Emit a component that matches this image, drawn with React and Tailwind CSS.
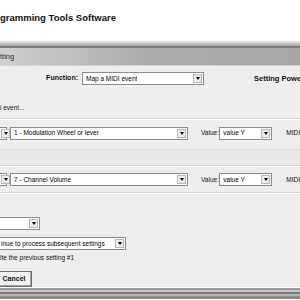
function Arrow() {
  return (
    <div className="ml-auto w-[9px] h-full shrink-0 bg-[#ececec] border border-[#b8b8b8] flex items-center justify-center">
      <div className="w-0 h-0 border-l-[2.5px] border-r-[2.5px] border-t-[3px] border-l-transparent border-r-transparent border-t-black" />
    </div>
  );
}

function Select({ width, text, className = '', cut = false }) {
  return (
    <div className={`h-[13px] bg-white border border-[#8c8c8c] flex items-center shrink-0 p-[1px] ${width} ${className}`}>
      <span className={`block text-left min-w-0 overflow-hidden whitespace-nowrap text-[6.5px] text-black ${cut ? '' : 'pl-[2px]'}`}>{text}</span>
      <Arrow />
    </div>
  );
}

export default function App() {
  return (
    <div className="w-[300px] h-[300px] overflow-hidden bg-white flex flex-col font-['Liberation_Sans',Arial,sans-serif] text-[#111]">
      {/* page header */}
      <div className="h-[40px] shrink-0 flex items-center">
        <h1 className="text-[9.5px] font-bold leading-none -mt-[4px] whitespace-nowrap">gramming Tools Software</h1>
      </div>

      {/* window frame top */}
      <div className="h-[6px] shrink-0 bg-gradient-to-b from-white to-[#a4a4a4]" />
      <div className="h-[2px] shrink-0 bg-[#7e7e7e]" />
      <div className="h-[17px] shrink-0 bg-gradient-to-r from-[#d0d0d0] via-[#ababab] to-[#a7a7a7] flex items-center">
        <span className="text-[7.5px] text-[#2a2a2a]">tting</span>
      </div>
      <div className="h-[1px] shrink-0 bg-[#d6d6d6]" />

      {/* dialog body */}
      <div className="h-[221px] shrink-0 bg-[#eeeeee] flex flex-col text-[6.5px]">
        <div className="flex items-center h-[13px] mt-[6px]">
          <span className="w-[78px] shrink-0 text-right font-bold text-[7px]">Function:</span>
          <Select width="w-[122px]" text="Map a MIDI event" className="ml-[4px]" />
          <span className="ml-[50px] shrink-0 font-bold text-[7.5px] whitespace-nowrap">Setting Power</span>
        </div>

        <div className="h-[20px] mt-[13px] flex items-center">
          <span>l event...</span>
        </div>
        <div className="h-[1px] bg-[#d4d4d4]" />
        <div className="h-[1px] bg-white" />

        <div className="flex items-center h-[13px] mt-[7px]">
          <div className="w-[7px] h-full bg-white border-y border-r border-[#8c8c8c] p-[1px] flex">
            <Arrow />
          </div>
          <Select width="w-[178px]" text="1 - Modulation Wheel or lever" className="ml-[3px]" />
          <span className="ml-[13px] w-[21px]">Value:</span>
          <Select width="w-[53px]" text="value Y" />
          <span className="ml-[14px]">MIDI</span>
        </div>

        <div className="h-[1px] bg-[#dcdcdc] mt-[9px]" />
        <div className="h-[16px] bg-[#e9e9e9]" />
        <div className="h-[1px] bg-[#d2d2d2]" />
        <div className="h-[1px] bg-white" />

        <div className="flex items-center h-[13px] mt-[6px]">
          <div className="w-[7px] h-full bg-white border-y border-r border-[#8c8c8c] p-[1px] flex">
            <Arrow />
          </div>
          <Select width="w-[178px]" text="7 - Channel Volume" className="ml-[3px]" />
          <span className="ml-[13px] w-[21px]">Value:</span>
          <Select width="w-[53px]" text="value Y" />
          <span className="ml-[14px]">MIDI</span>
        </div>

        <div className="h-[1px] bg-[#d4d4d4] mt-[6px]" />
        <div className="h-[1px] bg-white" />

        <Select width="w-[40px]" text="" cut className="mt-[23px] border-l-0" />
        <Select width="w-[126px]" text="inue to process subsequent settings" cut className="mt-[7px] border-l-0" />
        <div className="h-[10px] mt-[3px] flex items-center">
          <span>ite the previous setting #1</span>
        </div>
        <div className="mt-[8px] w-[32px] h-[16px] bg-[#f2f2f2] border-y border-r border-[#6e6e6e] shadow-[inset_-1px_-1px_0_#a0a0a0] flex items-center justify-center">
          <span className="font-bold text-[7px] -ml-[3px]">Cancel</span>
        </div>
      </div>

      {/* window frame bottom */}
      <div className="h-[1px] shrink-0 bg-white" />
      <div className="h-[2px] shrink-0 bg-[#9c9c9c]" />
      <div className="h-[2px] shrink-0 bg-[#c4c4c4]" />
      <div className="h-[2px] shrink-0 bg-[#7a7a7a]" />
      <div className="h-[2px] shrink-0 bg-[#b4b4b4]" />
      <div className="h-[3px] shrink-0 bg-[#8a8a8a]" />
    </div>
  );
}
